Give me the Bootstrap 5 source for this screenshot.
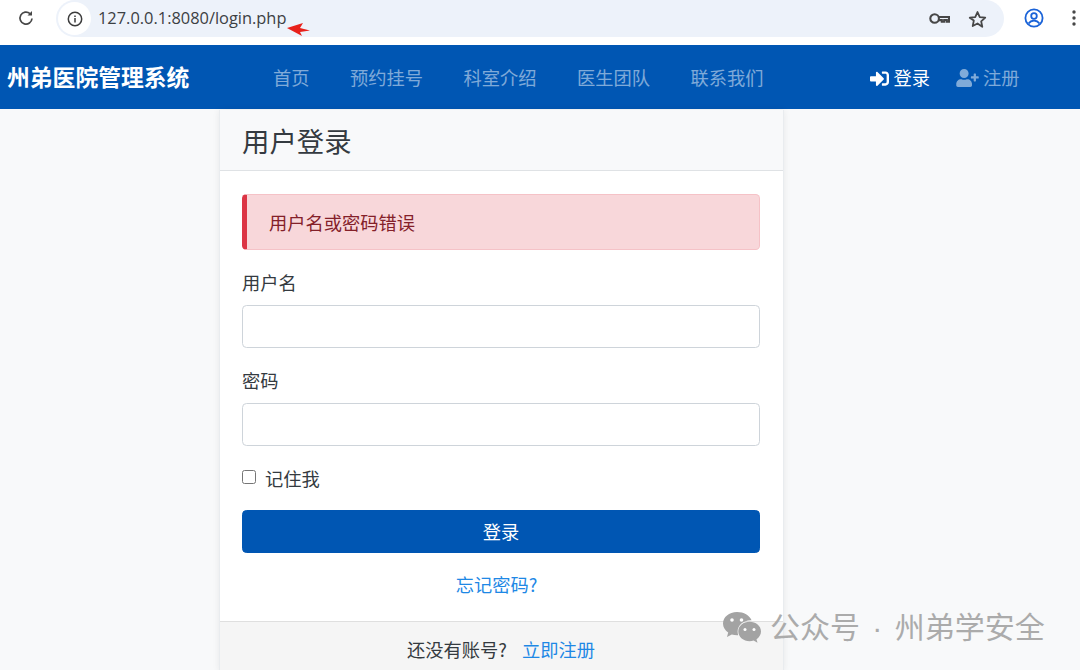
<!DOCTYPE html>
<html lang="zh-CN">
<head>
<meta charset="utf-8">
<title>用户登录</title>
<link href="https://cdn.jsdelivr.net/npm/bootstrap@5.3.0/dist/css/bootstrap.min.css" rel="stylesheet">
<style>
html,body{height:670px;overflow:hidden}
body{background:#f8f9fa;font-family:"Noto Sans CJK SC","Liberation Sans",sans-serif;font-size:18.25px;color:#343a40;position:relative}
.chrome-bar{height:45px;background:#fff;padding-left:16px}
.reload-btn{width:20px;height:20px;margin-top:-10px}
.omni{width:948px;height:37px;margin-left:20px;margin-top:-8px;padding-left:1px;background:#edf2fa;border-radius:18.5px}
.omni-info{width:33px;height:33px;background:#fff;border-radius:50%;margin-left:1px}
.omni-url{font-family:"Open Sans","Liberation Sans",sans-serif;font-size:16.4px;color:#3c4043;margin-left:7px}
.omni-right{gap:18px;padding-right:17px}
.chrome-tail{gap:28px;margin-left:20px;margin-top:-10px}
.site-nav{height:64px;background:#0056b3;padding:0 0 0 7px}
.site-brand{font-size:22.8px;font-weight:700;color:#fff;width:266px;white-space:nowrap;line-height:1}
.site-links{gap:40.5px;padding-top:2px}
.site-links a{font-size:18.25px;color:rgba(255,255,255,.5);text-decoration:none}
.site-side{margin-left:106px;gap:26px;padding-top:2px}
.site-side a{font-size:18.25px;text-decoration:none;color:rgba(255,255,255,.5);display:flex;align-items:center;gap:4px}
.site-side a.is-on{color:#fff;gap:5px}
.site-side a.is-on svg{width:19px;height:19px}
.login-card{width:565px;margin-left:218.5px;margin-top:1px;border-radius:0;border:1px solid #e9ecef;border-top:0;box-shadow:0 0 7px rgba(0,0,0,.07)}
.login-head{height:61px;padding:0 22.5px;background:#f8f9fa;border-bottom:1px solid #dfe2e5;font-size:27.4px;line-height:61px;border-radius:0!important;color:#343a40}
.login-body{padding:23px 22.5px 0;height:450px}
.fail-box{height:56px;padding:1px 22px 0;margin-bottom:19px;background:#f8d7da;color:#842029;border:1px solid #f5c2c7;border-left:5px solid #dc3545;border-radius:4.5px;display:flex;align-items:center}
.field-label{display:block;line-height:26px;margin-bottom:10px}
.field-input{height:43px;border:1px solid #ced4da;border-radius:4.5px;margin-bottom:19px}
.remember{margin-top:-1px;margin-bottom:16px;height:30px;gap:9px}
.remember .form-check-input{width:14px;height:14px;margin:-4px 0 0 0;border-color:#767676;border-radius:2.5px;float:none}
.go-btn{height:43px;background:#0056b3;border-color:#0056b3;border-radius:4.5px;font-size:18.25px;padding:0}
.forgot{margin-top:18px;line-height:26px;padding-right:9px}
.forgot a,.login-foot a{color:#1e88e5;text-decoration:none}
.login-foot{height:50px;padding:14px 0 0;background:#f5f5f5;border-top:1px solid #dfdfdf;border-radius:0!important;gap:15px;line-height:27px}
.wm{position:absolute;left:722px;top:610px;gap:8px;color:#ababab;font-family:"Liberation Sans","Noto Sans CJK SC",sans-serif;font-size:30px;line-height:36px;word-spacing:4px;white-space:nowrap}
.red-arrow{position:absolute;left:287px;top:22px}
</style>
</head>
<body>
<header class="chrome-bar d-flex align-items-center">
  <svg class="reload-btn" viewBox="0 0 20 20" fill="none" stroke="#474747" stroke-width="1.7"><path d="M16 10.5A6 6 0 1 1 14 5.6"/><path d="M16 3v4.5h-4.500z" fill="#474747" stroke="none"/></svg>
  <div class="omni d-flex align-items-center">
    <div class="omni-info d-flex align-items-center justify-content-center">
      <svg width="16" height="16" viewBox="0 0 16 16" fill="none" stroke="#3c3c3c" stroke-width="1.5"><circle cx="8" cy="8" r="6.7"/><path d="M8 7v4.4M8 4.4v1.5"/></svg>
    </div>
    <span class="omni-url">127.0.0.1:8080/login.php</span>
    <div class="omni-right d-flex align-items-center ms-auto">
      <svg width="21" height="13" viewBox="0 0 21 13" fill="none" stroke="#474747" stroke-width="2.100"><circle cx="5.600" cy="6.500" r="4.300"/><path d="M9.800 5H20v4.600h-2.200V8h-2.600v1.600h-2.400V8.100H9.800"/></svg>
      <svg width="19" height="18" viewBox="0 0 24 23" fill="none" stroke="#474747" stroke-width="2.300" stroke-linejoin="round"><path d="M12 2.600l2.900 6.400 7 .8-5.200 4.700 1.400 6.900L12 17.200l-6.100 3.200 1.400-6.900L2.100 9.800l7-.8z"/></svg>
    </div>
  </div>
  <div class="chrome-tail d-flex align-items-center">
    <svg width="20" height="20" viewBox="0 0 20 20" fill="none" stroke="#1a63d8" stroke-width="1.800"><circle cx="10" cy="10" r="8.600"/><circle cx="10" cy="8" r="2.800"/><path d="M4.600 15.600c1.400-2.200 3.200-3 5.400-3s4 .8 5.400 3"/></svg>
    <svg width="4" height="16" viewBox="0 0 4 16" fill="#474747"><circle cx="2" cy="2" r="1.700"/><circle cx="2" cy="8" r="1.700"/><circle cx="2" cy="14" r="1.700"/></svg>
  </div>
</header>
<svg class="red-arrow" width="24" height="16" viewBox="0 0 24 16" fill="#e8211b"><path d="M0 6L16 1 13 6 23 8.500 13 10 15 14z"/></svg>
<nav class="site-nav d-flex align-items-center">
  <a class="site-brand text-decoration-none" href="#">州弟医院管理系统</a>
  <div class="site-links d-flex">
    <a href="#">首页</a><a href="#">预约挂号</a><a href="#">科室介绍</a><a href="#">医生团队</a><a href="#">联系我们</a>
  </div>
  <div class="site-side d-flex">
    <a class="is-on" href="#"><svg viewBox="0 0 512 512" fill="currentColor"><path d="M416 448h-84c-6.600 0-12-5.400-12-12v-40c0-6.600 5.400-12 12-12h84c17.700 0 32-14.300 32-32V160c0-17.700-14.300-32-32-32h-84c-6.600 0-12-5.400-12-12V76c0-6.600 5.400-12 12-12h84c53 0 96 43 96 96v192c0 53-43 96-96 96zm-47-201L201 79c-15-15-41-4.500-41 17v96H24c-13.300 0-24 10.700-24 24v96c0 13.300 10.700 24 24 24h136v96c0 21.500 26 32 41 17l168-168c9.300-9.400 9.300-24.600 0-34z"/></svg>登录</a>
    <a href="#"><svg width="23" height="18" viewBox="0 0 640 512" fill="currentColor"><path d="M624 208h-64v-64c0-8.800-7.200-16-16-16h-32c-8.800 0-16 7.200-16 16v64h-64c-8.800 0-16 7.200-16 16v32c0 8.800 7.200 16 16 16h64v64c0 8.800 7.200 16 16 16h32c8.800 0 16-7.200 16-16v-64h64c8.800 0 16-7.200 16-16v-32c0-8.800-7.200-16-16-16zm-400 48c70.700 0 128-57.300 128-128S294.700 0 224 0 96 57.300 96 128s57.300 128 128 128zm89.600 32h-16.700c-22.200 10.200-46.900 16-72.900 16s-50.600-5.800-72.900-16h-16.700C60.200 288 0 348.200 0 422.400V464c0 26.500 21.500 48 48 48h352c26.500 0 48-21.500 48-48v-41.600c0-74.200-60.200-134.400-134.400-134.400z"/></svg>注册</a>
  </div>
</nav>
<main class="card login-card">
  <div class="card-header login-head">用户登录</div>
  <div class="card-body login-body">
    <div class="fail-box" role="alert">用户名或密码错误</div>
    <form>
      <label class="field-label" for="u">用户名</label>
      <input class="form-control field-input" id="u" type="text">
      <label class="field-label" for="p">密码</label>
      <input class="form-control field-input" id="p" type="password">
      <div class="remember d-flex align-items-center">
        <input class="form-check-input" type="checkbox" id="r">
        <label for="r">记住我</label>
      </div>
      <button class="btn btn-primary w-100 go-btn" type="button">登录</button>
      <div class="forgot text-center"><a href="#">忘记密码?</a></div>
    </form>
  </div>
  <div class="card-footer login-foot d-flex justify-content-center">
    <span>还没有账号?</span><a href="#">立即注册</a>
  </div>
</main>
<div class="wm d-flex align-items-center">
  <svg width="40" height="34" viewBox="0 0 40 34" fill="#a3a3a3"><path d="M15 1C7 1 1 6.200 1 12.600c0 3.700 2 6.800 5.200 9L5 26l4.800-2.500c1.700.5 3.400.7 5.200.7h1.200c-.4-1.200-.6-2.400-.6-3.600 0-6.300 5.700-11.400 13-11.400h1C27.600 4.400 21.800 1 15 1z"/><path d="M39 20.500C39 15 33.800 10.800 27.600 10.800S16.300 15 16.300 20.500s5.200 9.700 11.300 9.700c1.400 0 2.800-.2 4-.6l3.900 2.200-1-3.600c2.700-1.900 4.500-4.600 4.500-7.700z"/><g fill="#fff"><circle cx="10" cy="9" r="1.800"/><circle cx="19.500" cy="9" r="1.800"/><circle cx="23" cy="18.500" r="1.500"/><circle cx="32" cy="18.500" r="1.500"/></g></svg>
  <span>公众号 · 州弟学安全</span>
</div>
</body>
</html>
